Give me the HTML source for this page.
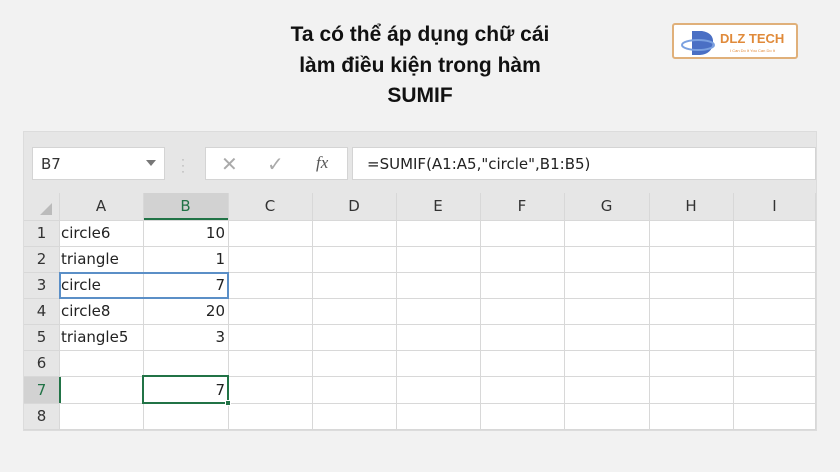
<!DOCTYPE html>
<html><head><style>
*{margin:0;padding:0;box-sizing:border-box}
body{width:840px;height:472px;background:#f2f2f2;position:relative;overflow:hidden;font-family:"Liberation Sans",sans-serif}
.t{position:absolute;left:200px;width:440px;text-align:center;font-weight:bold;font-size:21px;color:#111;line-height:30.5px;top:20px}
.panel{position:absolute;left:24px;top:132px;width:792px;height:298px;background:#e6e6e6;overflow:hidden;outline:1px solid #dcdcdc}
.box{position:absolute;background:#fff;border:1px solid #d4d4d4;top:15px;height:33px}
.grid{position:absolute;left:0;top:61px;width:792px;height:237px;background:#fff}
.hl{position:absolute;left:0;width:792px;height:1px;background:#d8d8d8}
.vl{position:absolute;top:0;height:237px;width:1px;background:#d8d8d8}
.ch{position:absolute;top:0;height:27px;background:#e6e6e6;text-align:center;line-height:27px;font-size:15px;color:#333;font-family:"DejaVu Sans",sans-serif}
.rh{position:absolute;left:0;width:35px;background:#e6e6e6;text-align:center;font-size:15px;color:#333;font-family:"DejaVu Sans",sans-serif}
.a{position:absolute;left:37px;font-size:15px;color:#222;font-family:"DejaVu Sans",sans-serif}
.b{position:absolute;left:119px;width:82px;text-align:right;font-size:15px;color:#222;font-family:"DejaVu Sans",sans-serif}
</style></head><body>
<div class="t">Ta có thể áp dụng chữ cái<br>làm điều kiện trong hàm<br>SUMIF</div>
<div style="position:absolute;left:672px;top:23px;width:126px;height:36px;background:#fff;border:2px solid #e0b07a;border-radius:3px">
<svg width="40" height="34" style="position:absolute;left:6px;top:0"><path d="M12 6 L22 6 Q34 8 33 18 Q32 29 20 30 L12 30 Z" fill="#4a6fc4"/><ellipse cx="18" cy="20" rx="16" ry="5" fill="none" stroke="#7aa0e0" stroke-width="2"/></svg>
<div style="position:absolute;left:46px;top:6px;font-weight:bold;font-size:13px;color:#e08a3a">DLZ TECH</div>
<div style="position:absolute;left:56px;top:23px;font-size:4px;color:#e08a3a">I Can Do It You Can Do It</div>
</div>
<div class="panel">
<div class="box" style="left:8px;width:133px"><span style="position:absolute;left:8px;top:7px;font-size:15px;color:#333;font-family:'DejaVu Sans',sans-serif">B7</span><span style="position:absolute;right:8px;top:12px;border:5px solid transparent;border-top:6px solid #777"></span></div>
<div style="position:absolute;left:157px;top:24px;color:#aaa;font-size:12px;line-height:6px">·<br>·<br>·</div>
<div class="box" style="left:181px;width:143px">
<span style="position:absolute;left:15px;top:4px;font-size:20px;color:#aaa">✕</span>
<span style="position:absolute;left:61px;top:4px;font-size:20px;color:#aaa">✓</span>
<span style="position:absolute;left:110px;top:5px;font-size:17px;color:#555;font-family:'Liberation Serif',serif;font-style:italic">fx</span></div>
<div class="box" style="left:328px;width:464px"><span style="position:absolute;left:14px;top:7px;font-size:15px;color:#222;font-family:'DejaVu Sans',sans-serif">=SUMIF(A1:A5,"circle",B1:B5)</span></div>
<div class="grid">
<div class="ch" style="left:0;width:35px"><svg width="35" height="27"><path d="M28 22 L28 10 L16 22 Z" fill="#bbb"/></svg></div>
<div class="ch" style="left:35px;width:84px">A</div>
<div class="ch" style="left:119px;width:85px;background:#d2d2d2;border-bottom:2px solid #217346;color:#217346">B</div>
<div class="ch" style="left:204px;width:84px">C</div>
<div class="ch" style="left:288px;width:84px">D</div>
<div class="ch" style="left:372px;width:84px">E</div>
<div class="ch" style="left:456px;width:84px">F</div>
<div class="ch" style="left:540px;width:85px">G</div>
<div class="ch" style="left:625px;width:84px">H</div>
<div class="ch" style="left:709px;width:83px">I</div>
<div class="rh" style="top:27px;height:210px"></div>
<div class="rh" style="top:183px;height:27px;background:#d2d2d2"></div>
<div class="vl" style="left:35px"></div><div class="vl" style="left:119px"></div><div class="vl" style="left:204px"></div><div class="vl" style="left:288px"></div><div class="vl" style="left:372px"></div><div class="vl" style="left:456px"></div><div class="vl" style="left:540px"></div><div class="vl" style="left:625px"></div><div class="vl" style="left:709px"></div><div class="vl" style="left:791px"></div>
<div class="hl" style="top:27px"></div><div class="hl" style="top:53px"></div><div class="hl" style="top:79px"></div><div class="hl" style="top:105px"></div><div class="hl" style="top:131px"></div><div class="hl" style="top:157px"></div><div class="hl" style="top:183px"></div><div class="hl" style="top:210px"></div><div class="hl" style="top:236px"></div>
<div class="rh" style="top:31px">1</div><div class="rh" style="top:57px">2</div><div class="rh" style="top:83px">3</div><div class="rh" style="top:109px">4</div><div class="rh" style="top:135px">5</div><div class="rh" style="top:161px">6</div><div class="rh" style="top:188px;color:#217346;background:none">7</div><div class="rh" style="top:214px;background:none">8</div>
<div class="a" style="top:31px">circle6</div><div class="b" style="top:31px">10</div>
<div class="a" style="top:57px">triangle</div><div class="b" style="top:57px">1</div>
<div style="position:absolute;left:35px;top:79px;width:170px;height:27px;border:2px solid #5b8fc7"></div>
<div class="a" style="top:83px">circle</div><div class="b" style="top:83px">7</div>
<div class="a" style="top:109px">circle8</div><div class="b" style="top:109px">20</div>
<div class="a" style="top:135px">triangle5</div><div class="b" style="top:135px">3</div>
<div style="position:absolute;left:35px;top:184px;width:2px;height:26px;background:#217346"></div>
<div style="position:absolute;left:118px;top:182px;width:87px;height:29px;border:2px solid #217346"></div>
<div style="position:absolute;left:201px;top:207px;width:6px;height:6px;background:#217346;border:1px solid #fff"></div>
<div class="b" style="top:188px">7</div>
</div>
</div>
</body></html>
